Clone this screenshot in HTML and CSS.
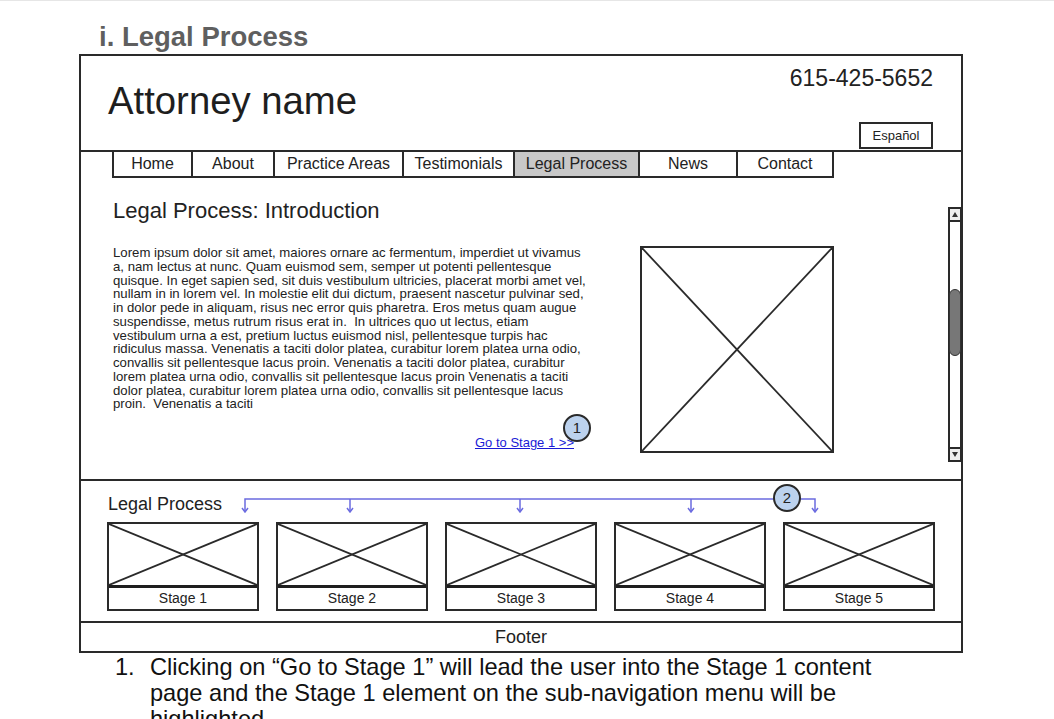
FILE: index.html
```html
<!DOCTYPE html>
<html lang="en">
<head>
<meta charset="utf-8">
<title>i. Legal Process</title>
<link rel="stylesheet" href="styles.css">
</head>
<body>
<h1 class="doc-title">i. Legal Process</h1>
<div class="wire">
  <header class="hdr">
    <div class="brand">Attorney name</div>
    <div class="hdr-right">
      <div class="phone">615-425-5652</div>
      <div class="lang">Español</div>
    </div>
  </header>
  <nav class="nav">
    <div class="tab tab-home">Home</div>
    <div class="tab tab-about">About</div>
    <div class="tab tab-practice">Practice Areas</div>
    <div class="tab tab-testi">Testimonials</div>
    <div class="tab tab-legal is-active">Legal Process</div>
    <div class="tab tab-news">News</div>
    <div class="tab tab-contact">Contact</div>
  </nav>
  <section class="content">
    <div class="main">
      <h2 class="intro-title">Legal Process: Introduction</h2>
      <div class="intro-row">
        <div class="text-col">
          <p class="copy">Lorem ipsum dolor sit amet, maiores ornare ac fermentum, imperdiet ut vivamus<br>a, nam lectus at nunc. Quam euismod sem, semper ut potenti pellentesque<br>quisque. In eget sapien sed, sit duis vestibulum ultricies, placerat morbi amet vel,<br>nullam in in lorem vel. In molestie elit dui dictum, praesent nascetur pulvinar sed,<br>in dolor pede in aliquam, risus nec error quis pharetra. Eros metus quam augue<br>suspendisse, metus rutrum risus erat in. &nbsp;In ultrices quo ut lectus, etiam<br>vestibulum urna a est, pretium luctus euismod nisl, pellentesque turpis hac<br>ridiculus massa. Venenatis a taciti dolor platea, curabitur lorem platea urna odio,<br>convallis sit pellentesque lacus proin. Venenatis a taciti dolor platea, curabitur<br>lorem platea urna odio, convallis sit pellentesque lacus proin Venenatis a taciti<br>dolor platea, curabitur lorem platea urna odio, convallis sit pellentesque lacus<br>proin. &nbsp;Venenatis a taciti</p>
          <div class="go-row">
            <a class="go-link" href="#">Go to Stage 1 &gt;&gt;</a>
            <div class="badge badge-1">1</div>
          </div>
        </div>
        <div class="ph ph-main">
          <svg class="xsvg" viewBox="0 0 100 100" preserveAspectRatio="none"><line x1="0" y1="0" x2="100" y2="100"/><line x1="100" y1="0" x2="0" y2="100"/></svg>
        </div>
      </div>
    </div>
    <div class="scroll">
      <div class="sb-btn sb-up"><span class="tri-up"></span></div>
      <div class="sb-track"><div class="sb-thumb"></div></div>
      <div class="sb-btn sb-down"><span class="tri-down"></span></div>
    </div>
  </section>
  <section class="sub">
    <svg class="flow" width="880" height="40" viewBox="0 0 880 40">
      <path d="M164 31 V18 H734 V31"/>
      <path d="M269 18 V31 M439 18 V31 M610 18 V31"/>
      <path d="M161 27 L164 31 L167 27 M266 27 L269 31 L272 27 M436 27 L439 31 L442 27 M607 27 L610 31 L613 27 M731 27 L734 31 L737 27"/>
    </svg>
    <div class="badge badge-2">2</div>
    <div class="sub-label">Legal Process</div>
    <div class="stages">
      <div class="stage"><div class="stage-img"><svg class="xsvg" viewBox="0 0 100 100" preserveAspectRatio="none"><line x1="0" y1="0" x2="100" y2="100"/><line x1="100" y1="0" x2="0" y2="100"/></svg></div><div class="stage-lbl">Stage 1</div></div>
      <div class="stage"><div class="stage-img"><svg class="xsvg" viewBox="0 0 100 100" preserveAspectRatio="none"><line x1="0" y1="0" x2="100" y2="100"/><line x1="100" y1="0" x2="0" y2="100"/></svg></div><div class="stage-lbl">Stage 2</div></div>
      <div class="stage"><div class="stage-img"><svg class="xsvg" viewBox="0 0 100 100" preserveAspectRatio="none"><line x1="0" y1="0" x2="100" y2="100"/><line x1="100" y1="0" x2="0" y2="100"/></svg></div><div class="stage-lbl">Stage 3</div></div>
      <div class="stage"><div class="stage-img"><svg class="xsvg" viewBox="0 0 100 100" preserveAspectRatio="none"><line x1="0" y1="0" x2="100" y2="100"/><line x1="100" y1="0" x2="0" y2="100"/></svg></div><div class="stage-lbl">Stage 4</div></div>
      <div class="stage"><div class="stage-img"><svg class="xsvg" viewBox="0 0 100 100" preserveAspectRatio="none"><line x1="0" y1="0" x2="100" y2="100"/><line x1="100" y1="0" x2="0" y2="100"/></svg></div><div class="stage-lbl">Stage 5</div></div>
    </div>
  </section>
  <footer class="foot">Footer</footer>
</div>
<div class="note">
  <span class="note-num">1.</span>
  <span class="note-text">Clicking on “Go to Stage 1” will lead the user into the Stage 1 content<br>page and the Stage 1 element on the sub-navigation menu will be<br>highlighted.</span>
</div>
</body>
</html>
```
FILE: styles.css
```css
html { overflow: hidden; }
body {
  margin: 0;
  font-family: "Liberation Sans", Arial, sans-serif;
  color: #222;
  background: #fff;
  border-top: 1px solid #e6e6e6;
}
.doc-title {
  margin: 20px 0 0 99px;
  font-size: 27.5px;
  line-height: 31px;
  font-weight: bold;
  color: #5f5f5f;
}
.wire {
  margin: 2px 0 0 79px;
  width: 884px;
  box-sizing: border-box;
  border: 2px solid #2a2a2a;
}
.hdr {
  display: flex;
  justify-content: space-between;
  height: 94px;
  border-bottom: 2px solid #2a2a2a;
  padding: 0 28px 0 27px;
}
.brand {
  margin-top: 23px;
  font-size: 38.3px;
  line-height: 44px;
  color: #1e1e1e;
}
.hdr-right {
  display: flex;
  flex-direction: column;
  align-items: flex-end;
  justify-content: space-between;
  padding: 9px 0 1px;
}
.phone { font-size: 23px; line-height: 26px; color: #222; }
.lang {
  box-sizing: border-box;
  width: 74px;
  height: 27px;
  border: 2px solid #2a2a2a;
  font-size: 13px;
  line-height: 23px;
  text-align: center;
}
.nav { display: flex; margin-left: 31px; }
.tab {
  box-sizing: border-box;
  height: 26px;
  border-left: 2px solid #2a2a2a;
  border-bottom: 2px solid #2a2a2a;
  font-size: 16px;
  line-height: 24px;
  text-align: center;
  color: #222;
}
.tab-home { width: 79px; }
.tab-about { width: 82px; }
.tab-practice { width: 129px; }
.tab-testi { width: 111px; }
.tab-legal { width: 125px; }
.tab-news { width: 98px; }
.tab-contact { width: 98px; border-right: 2px solid #2a2a2a; }
.is-active { background: #c8c8c8; }

.content {
  display: flex;
  height: 301px;
  border-bottom: 2px solid #2a2a2a;
}
.main { flex: 1; padding-left: 32px; }
.intro-title {
  margin: 20px 0 0;
  font-size: 22px;
  line-height: 26px;
  font-weight: normal;
  color: #222;
}
.intro-row { display: flex; margin-top: 22px; }
.text-col { width: 527px; }
.copy {
  margin: 0;
  font-size: 13.2px;
  line-height: 13.75px;
  white-space: nowrap;
  color: #222;
}
.go-row {
  position: relative;
  margin-top: 24px;
  padding-right: 66px;
  text-align: right;
  font-size: 13px;
  line-height: 16px;
}
.go-link { color: #1a1ad6; text-decoration: underline; }
.badge {
  position: absolute;
  box-sizing: border-box;
  width: 28px;
  height: 28px;
  border: 2px solid #2a2a2a;
  border-radius: 50%;
  background: #bcd2ee;
  font-size: 15px;
  line-height: 24px;
  text-align: center;
  color: #222;
}
.badge-1 { top: -21px; right: 49px; }
.ph {
  box-sizing: border-box;
  border: 2px solid #2a2a2a;
}
.ph-main { width: 194px; height: 207px; }
.xsvg { display: block; width: 100%; height: 100%; }
.xsvg line { stroke: #2a2a2a; stroke-width: 1.8; vector-effect: non-scaling-stroke; }

.scroll {
  box-sizing: border-box;
  width: 14px;
  height: 255px;
  margin: 29px -1px 0 0;
  border: 2px solid #2a2a2a;
  display: flex;
  flex-direction: column;
}
.sb-btn {
  height: 11px;
  background: #eee;
  display: flex;
  align-items: center;
  justify-content: center;
}
.sb-up { border-bottom: 2px solid #2a2a2a; }
.sb-down { border-top: 2px solid #2a2a2a; }
.tri-up, .tri-down { width: 0; height: 0; border-left: 3px solid transparent; border-right: 3px solid transparent; }
.tri-up { border-bottom: 5px solid #333; }
.tri-down { border-top: 5px solid #333; }
.sb-track { flex: 1; }
.sb-thumb {
  box-sizing: border-box;
  margin: 67px -1px 0;
  height: 67px;
  background: #777;
  border: 1px solid #333;
  border-radius: 6px;
}

.sub {
  position: relative;
  height: 140px;
  border-bottom: 2px solid #2a2a2a;
}
.flow { position: absolute; left: 0; top: 0; }
.flow path { fill: none; stroke: #6b6be0; stroke-width: 1.5; }
.badge-2 { left: 692px; top: 3px; }
.sub-label {
  padding: 13px 0 0 27px;
  font-size: 18px;
  line-height: 21px;
  color: #222;
}
.stages {
  display: flex;
  justify-content: space-between;
  margin: 7px 26px 0;
}
.stage {
  box-sizing: border-box;
  width: 152px;
  border: 2px solid #2a2a2a;
}
.stage-img { height: 61px; border-bottom: 3px solid #1e1e1e; }
.stage-lbl {
  height: 21px;
  font-size: 14px;
  line-height: 21px;
  text-align: center;
  color: #222;
}
.foot {
  height: 28px;
  font-size: 18px;
  line-height: 28px;
  text-align: center;
  color: #222;
}
.note {
  display: flex;
  margin: 1px 0 0 115px;
  font-size: 23.6px;
  line-height: 26px;
  color: #111;
}
.note-num { width: 35px; flex: none; }
.note-text { white-space: nowrap; }
```
